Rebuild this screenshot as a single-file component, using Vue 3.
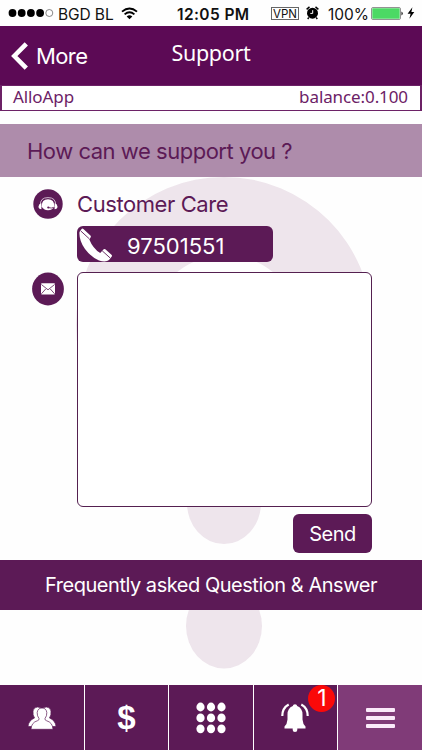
<script setup>
import { ref } from 'vue'

const message = ref('')
const signal = [true, true, true, true, false]
const dots = [0, 1, 2, 3, 4, 5, 6, 7, 8]
</script>

<template>
  <div class="screen">
    <div class="status">
      <div class="status-left">
        <svg class="signal" width="46" height="10" viewBox="0 0 46 10">
          <circle
            v-for="(on, i) in signal"
            :key="i"
            :cx="4.5 + i * 9.2"
            cy="5"
            :r="on ? 3.9 : 3.5"
            :fill="on ? '#000' : '#fff'"
            :stroke="on ? 'none' : '#555'"
            stroke-width=".7"
          />
        </svg>
        <span class="carrier">BGD BL</span>
        <svg class="wifi" width="17" height="13" viewBox="0 0 17 13" fill="none" stroke="#000" stroke-width="1.9">
          <path d="M1 4.6Q8.500-1.8 16 4.600M3.600 7.400Q8.500 3.100 13.400 7.400" />
          <path d="M8.500 12.200L5.700 9.400Q8.500 7.300 11.300 9.400Z" fill="#000" stroke="none" />
        </svg>
      </div>
      <span class="clock">12:05 PM</span>
      <div class="status-right">
        <span class="vpn">VPN</span>
        <svg class="alarm" width="13" height="14" viewBox="0 0 13 14">
          <circle cx="6.500" cy="7.200" r="5.500" />
          <path d="M.6 3.400L3.500.9M12.400 3.400L9.500.9M2.800 11.500L1.700 13M10.200 11.500L11.300 13" stroke="#000" stroke-width="1.400" />
          <path d="M6.700 4.200V7.400H4.300" fill="none" stroke="#fff" stroke-width="1" />
        </svg>
        <span class="percent">100%</span>
        <svg class="battery" width="33" height="13" viewBox="0 0 33 13">
          <rect x=".5" y=".5" width="29" height="12" rx="1.500" fill="#fff" stroke="#777" stroke-width=".8" />
          <rect x="1.300" y="1.300" width="27.400" height="10.400" rx=".6" fill="#4cd964" />
          <path d="M30.500 4.500Q33 6.500 30.500 8.500Z" />
        </svg>
        <svg class="bolt" width="8" height="12" viewBox="0 0 8 12">
          <path d="M5.400.3L.6 6.700H3.600L2.400 11.700L7.300 5.100H4.400Z" />
        </svg>
      </div>
    </div>

    <header class="header">
      <button class="back">
        <svg width="18" height="28" viewBox="0 0 18 28" fill="none" stroke="#fff" stroke-width="4.600">
          <path d="M15.300 1.800L3.300 14L15.300 26.200" />
        </svg>
        <span>More</span>
      </button>
      <h1>Support</h1>
    </header>

    <div class="account">
      <span class="app-name">AlloApp</span>
      <span class="balance">balance:0.100</span>
    </div>

    <main class="main">
      <svg class="watermark" width="422" height="508" viewBox="0 0 422 508" fill="#eee5ec">
        <path fill-rule="evenodd" d="M76 148A148 148 0 0 1 372 148A148 148 0 0 1 76 148ZM150 152A75 74 0 0 0 300 152A75 74 0 0 0 150 152Z" />
        <ellipse cx="224" cy="326" rx="37" ry="41" />
        <ellipse cx="224" cy="449" rx="38" ry="42.500" />
      </svg>

      <h2 class="question"><span>How can we support you ?</span></h2>

      <div class="care">
        <svg class="care-icon" width="30" height="30" viewBox="0 0 30 30">
          <circle cx="15" cy="15" r="14.700" fill="#5c1a56" />
          <path d="M7.400 16.500Q6.800 8.600 15 8.600T22.600 16.500" fill="none" stroke="#e9dce8" stroke-width=".8" />
          <path d="M8.600 17.500Q8.600 10.200 15 10.200T21.400 17.500Q19.500 21.200 15 21.200T8.600 17.500Z" fill="#fff" />
          <path d="M5.500 17.500Q5.800 14.600 8.400 14.200V20.200Q5.500 20.200 5.500 17.500ZM24.500 17.500Q24.200 14.600 21.600 14.200V20.200Q24.500 20.200 24.500 17.500Z" fill="#fff" />
          <path d="M20.800 18.300Q18.500 19.600 15.500 18.600" fill="none" stroke="#5c1a56" stroke-width=".8" />
          <circle cx="15.300" cy="18.500" r="1.100" fill="#5c1a56" />
        </svg>
        <span class="care-title">Customer Care</span>
      </div>

      <button class="phone">
        <svg width="38" height="36" viewBox="0 0 38 36">
          <path d="M2.500 6Q1.800 14 8 23Q14 31 22 34.500Q29 36.500 32 34L34.800 30.500Q35.300 29.500 34.500 28.800L28.300 23.300Q27.200 22.600 26.400 23.500L23.200 27Q16 22.500 12.300 13.400L13.700 11.300Q14.200 10.400 13.400 9.600L6.400 3Q5.300 2.100 4.400 3.200Z" fill="#fff" />
          <path d="M3.800 5L12.300 12.800M25.200 24.800L33.200 32" fill="none" stroke="#5c1a56" stroke-width=".9" />
        </svg>
        <span>97501551</span>
      </button>

      <div class="compose">
        <svg class="mail-icon" width="32" height="34" viewBox="0 0 32 34">
          <ellipse cx="16" cy="17" rx="15.900" ry="16.400" fill="#5c1a56" />
          <rect x="9" y="11.300" width="14" height="11.200" rx="1" fill="#fff" />
          <path d="M9.400 12.500L16 17.800L22.600 12.500M9.400 21.800L13.700 17M22.600 21.800L18.300 17" fill="none" stroke="#5c1a56" stroke-width=".8" />
        </svg>
        <textarea v-model="message"></textarea>
      </div>

      <button class="send"><span>Send</span></button>
      <button class="faq"><span>Frequently asked Question &amp; Answer</span></button>
    </main>

    <nav class="tabs">
      <button class="tab">
        <svg width="28" height="24" viewBox="0 0 28 24" fill="#fff" stroke="#5c1a56" stroke-width=".7">
          <path d="M0 20.500Q.5 14.500 6.500 12Q4.500 9 5 5Q5.700 1 9.700 1T14.300 5Q15 9 12.500 12Q17 14 18 20.500Z" />
          <path d="M28 20.500Q27.500 14.500 21.500 12Q23.500 9 23 5Q22.300 1 18.300 1T13.700 5Q13 9 15.500 12Q11 14 10 20.500Z" />
          <path d="M3 23.300Q3.300 16.500 9.500 14.700Q11.500 14 11 12.500Q9 10 9.200 6.500Q9.800 2 14 2T18.800 6.500Q19 10 17 12.500Q16.500 14 18.500 14.700Q24.700 16.500 25 23.300Z" />
        </svg>
      </button>
      <button class="tab"><span class="dollar">$</span></button>
      <button class="tab">
        <svg width="30" height="32" viewBox="0 0 30 32" fill="#fff">
          <ellipse v-for="n in dots" :key="n" :cx="4.500 + (n % 3) * 10.500" :cy="5 + Math.floor(n / 3) * 10.900" rx="4.100" ry="4.400" />
        </svg>
      </button>
      <button class="tab">
        <svg width="30" height="30" viewBox="0 0 30 30">
          <path d="M14 1.200Q16 1.200 16.200 3Q21.500 5 21.500 11.500V16.500Q21.800 21 24.500 23.500V25.500H16.300V27Q16.300 29 14 29T11.700 27V25.500H3.500V23.500Q6.200 21 6.500 16.500V11.500Q6.500 5 11.800 3Q12 1.200 14 1.200Z" fill="#fff" />
          <path d="M7.700 1.500Q1.300 5 1.300 13M20.300 1.500Q26.700 5 26.700 13" fill="none" stroke="#fff" stroke-width="2.200" />
        </svg>
        <span class="badge">1</span>
      </button>
      <button class="tab active"><span class="menu"><i></i><i></i><i></i></span></button>
    </nav>
  </div>
</template>

<style>
body {
  margin: 0;
  background: #fefefe;
}
</style>

<style scoped>
.screen {
  display: flex;
  flex-direction: column;
  width: 422px;
  height: 750px;
  overflow: hidden;
  background: #fefefe;
  font-family: Inter, "Liberation Sans", sans-serif;
}
button {
  margin: 0;
  padding: 0;
  border: 0;
  color: #fff;
  background: none;
  font: inherit;
}
span {
  white-space: nowrap;
}
svg {
  display: block;
  flex: none;
}
.status {
  display: grid;
  grid-template-columns: 177px 72px 1fr;
  align-items: center;
  height: 26px;
  flex: none;
  font-size: 15.5px;
  color: #111;
}
.status-left,
.status-right {
  display: flex;
  align-items: center;
}
.status-left {
  padding-left: 8px;
}
.carrier {
  width: 56px;
  margin: 2px 7px 0 4px;
  letter-spacing: -0.1px;
}
.clock {
  padding-top: 2px;
  font-weight: 600;
  letter-spacing: 0.4px;
}
.status-right {
  padding-left: 22px;
}
.vpn {
  box-sizing: border-box;
  width: 28px;
  height: 13px;
  border: 1px solid #666;
  font-size: 11.5px;
  line-height: 12px;
  text-align: center;
}
.alarm {
  margin-left: 7px;
}
.percent {
  width: 41px;
  margin: 2px 2px 0 9px;
}
.bolt {
  margin-left: 3px;
}
.header {
  display: grid;
  grid-template-columns: 161px 100px 1fr;
  height: 59px;
  flex: none;
  color: #fff;
  background: #5c0a55;
}
.back {
  display: flex;
  align-items: center;
  gap: 7px;
  padding-left: 11px;
  font-size: 22px;
  letter-spacing: -0.6px;
}
h1 {
  margin: 0;
  text-align: center;
  font: 400 21.5px/54px "Noto Sans", sans-serif;
  letter-spacing: -0.3px;
}
.account {
  display: flex;
  box-sizing: border-box;
  justify-content: space-between;
  height: 26px;
  flex: none;
  padding: 0 12px 0 11px;
  border: solid #6c2166;
  border-width: 1px 2px;
  color: #6c2166;
  background: #fff;
  font: 17px/22px "Noto Sans", sans-serif;
  letter-spacing: -0.1px;
}
.main {
  position: relative;
  z-index: 0;
  display: flex;
  flex-direction: column;
  align-items: flex-start;
  height: 561px;
  margin-top: 13px;
}
.watermark {
  position: absolute;
  top: 53px;
  left: 0;
  z-index: -1;
}
.question {
  box-sizing: border-box;
  width: 100%;
  height: 53px;
  margin: 0;
  padding-left: 27px;
  color: #5c1a56;
  background: #ae8cab;
  font-size: 22px;
  font-weight: 400;
  line-height: 54px;
  letter-spacing: -0.48px;
}
.care {
  display: flex;
  align-items: center;
  height: 30px;
  padding: 12px 0 0 33px;
  gap: 14px;
  color: #5c1a56;
  font-size: 22px;
  letter-spacing: -0.42px;
}
.phone {
  display: flex;
  align-items: center;
  width: 196px;
  height: 36px;
  margin: 7px 0 0 77px;
  border-radius: 6px;
  background: #5c1a56;
  font-size: 22px;
}
.phone span {
  padding: 4px 0 0 12px;
}
.compose {
  display: flex;
  align-items: flex-start;
  gap: 13px;
  margin: 10px 0 0 32px;
}
textarea {
  box-sizing: border-box;
  width: 295px;
  height: 235px;
  margin: 0;
  padding: 8px;
  border: 1px solid #542050;
  border-radius: 6px;
  outline: 0;
  resize: none;
  background: #fff;
  font: inherit;
}
.send {
  width: 79px;
  height: 39px;
  margin: 7px 0 0 293px;
  border-radius: 6px;
  background: #5c1a56;
  font-size: 20px;
  letter-spacing: -0.5px;
}
.faq {
  width: 100%;
  height: 50px;
  margin-top: 7px;
  background: #5c1a56;
  font-size: 20px;
  letter-spacing: -0.47px;
}
.tabs {
  display: grid;
  grid-template-columns: repeat(5, 1fr);
  gap: 1px;
  height: 65px;
}
.tab {
  position: relative;
  display: flex;
  align-items: center;
  justify-content: center;
  background: #5c1a56;
}
.active {
  background: #803b78;
}
.dollar {
  font: 700 33px/40px "Liberation Sans", sans-serif;
}
.badge {
  position: absolute;
  top: 0;
  right: 2px;
  width: 27px;
  height: 27px;
  border-radius: 50%;
  background: #fa0909;
  font-size: 23px;
  line-height: 27px;
  text-align: center;
}
.menu {
  display: grid;
  gap: 4px;
}
.menu i {
  width: 29px;
  height: 4px;
  border-radius: 1px;
  background: #fbeafa;
}
</style>
